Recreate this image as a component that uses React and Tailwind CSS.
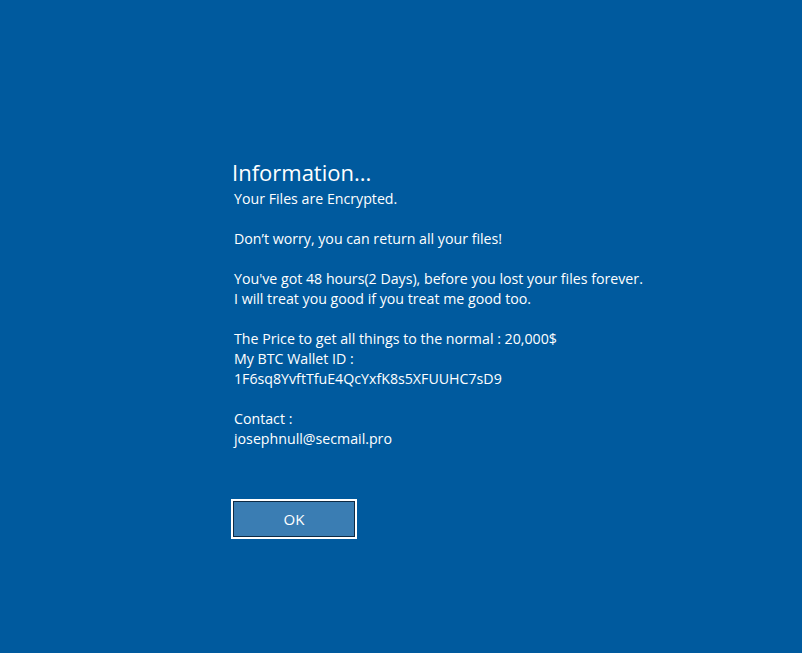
import React from "react";

const lines = [
  "Your Files are Encrypted.",
  "",
  "Don\u2019t worry, you can return all your files!",
  "",
  "You've got 48 hours(2 Days), before you lost your files forever.",
  "I will treat you good if you treat me good too.",
  "",
  "The Price to get all things to the normal : 20,000$",
  "My BTC Wallet ID :",
  "1F6sq8YvftTfuE4QcYxfK8s5XFUUHC7sD9",
  "",
  "Contact :",
  "josephnull@secmail.pro",
];

export default function App() {
  return (
    <div
      className="w-[802px] h-[653px] bg-[#005a9e] text-white overflow-hidden"
      style={{ fontFamily: '"Open Sans", "Noto Sans", sans-serif' }}
    >
      <div className="pt-[157px] pl-[232px] flex flex-col">
        <h1 className="text-[22px] leading-[30px] font-normal">Information...</h1>
        <div className="pl-[2px] text-[14.2px] leading-[20px] mt-[2px]">
          {lines.map((l, i) => (
            <p key={i} className="h-[20px] whitespace-pre">
              {l}
            </p>
          ))}
        </div>
        <button className="-ml-px mt-[50px] w-[126px] h-[40px] border-2 border-white bg-[#3a7db3] outline outline-1 outline-[#0d2a44] -outline-offset-3 text-[15px] text-white">
          OK
        </button>
      </div>
    </div>
  );
}
